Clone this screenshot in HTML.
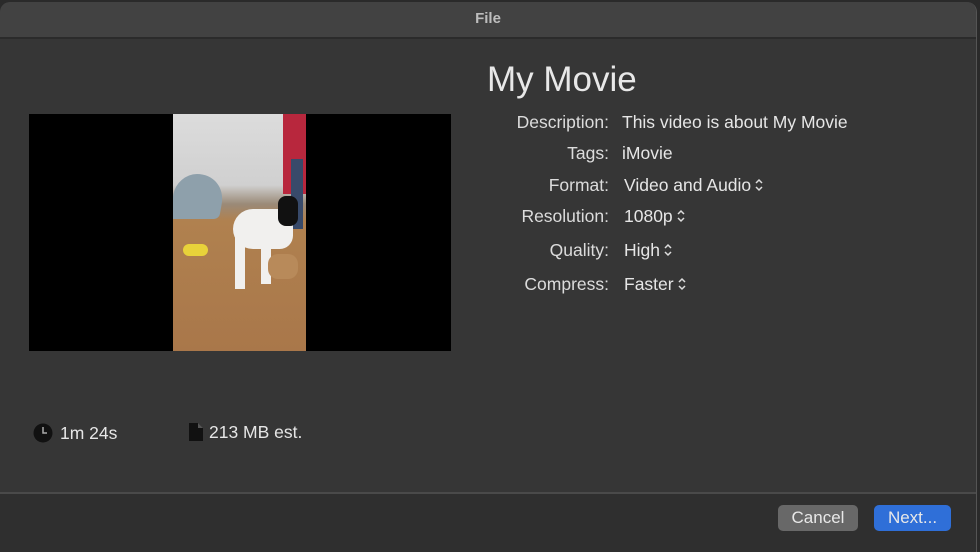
<!DOCTYPE html>
<html><head><style>
body{margin:0;width:980px;height:552px;background:#2a2a2a;overflow:hidden;font-family:"Liberation Sans",sans-serif;position:relative}
.win{position:absolute;left:0;top:2px;width:976px;height:550px;background:#363636;border-radius:10px 10px 0 0;overflow:hidden;border-right:1px solid #555}
.tb{position:absolute;left:0;top:0;right:0;height:35px;background:#424242;border-bottom:2px solid #2b2b2b;color:#bdbdbd;font-weight:bold;font-size:15px;text-align:center;line-height:34px}
.a{position:absolute;color:#e6e6e6;font-size:17.5px;white-space:nowrap}
.a svg{vertical-align:-2px;margin-left:3px}
.l{position:absolute;right:367px;color:#dcdcdc;font-size:17.5px;white-space:nowrap}
.btn{position:absolute;top:503px;height:26px;border-radius:5px;color:#e8e8e8;font-size:17px;text-align:center;line-height:26px}
</style></head><body>
<div class="win">
<div class="tb">File</div>
<div class="a" style="left:487px;top:58px;font-size:35px;color:#e8e8e8">My Movie</div>
<div style="position:absolute;left:29px;top:112px;width:422px;height:237px;background:#000"></div>
<div style="position:absolute;left:173px;top:112px;width:133px;height:237px;overflow:hidden;background:linear-gradient(#dcdcdc 0,#d0d0d0 30%,#9a8a78 38%,#b0814f 45%,#a9774a 100%)">
 <div style="position:absolute;left:0;top:60px;width:50px;height:45px;background:#8ea0ab;border-radius:20px 30px 5px 5px;transform:skewX(-10deg)"></div>
 <div style="position:absolute;left:110px;top:0;width:23px;height:80px;background:#b8273d"></div>
 <div style="position:absolute;left:118px;top:45px;width:12px;height:70px;background:#384a6a"></div>
 <div style="position:absolute;left:60px;top:95px;width:60px;height:40px;background:#f1f0ee;border-radius:30px 20px 20px 30px"></div>
 <div style="position:absolute;left:105px;top:82px;width:20px;height:30px;background:#111;border-radius:8px"></div>
 <div style="position:absolute;left:62px;top:120px;width:10px;height:55px;background:#f1f0ee"></div>
 <div style="position:absolute;left:88px;top:120px;width:10px;height:50px;background:#f1f0ee"></div>
 <div style="position:absolute;left:10px;top:130px;width:25px;height:12px;background:#e8d23a;border-radius:6px"></div>
 <div style="position:absolute;left:95px;top:140px;width:30px;height:25px;background:#b88a5a;border-radius:10px"></div>
</div>
<svg style="position:absolute;left:33px;top:421px" width="20" height="20" viewBox="0 0 20 20"><circle cx="10" cy="10" r="9.5" fill="#111"/><path d="M10 4V10H14" stroke="#aaa" stroke-width="1.5" fill="none"/></svg>
<div class="a" style="left:60px;top:421px">1m 24s</div>
<svg style="position:absolute;left:188px;top:420px" width="16" height="20" viewBox="0 0 16 20"><path d="M1 1H10L15 6V19H1Z" fill="#111"/><path d="M10 1V6H15" fill="#555"/></svg>
<div class="a" style="left:209px;top:420px">213 MB est.</div>
<div class="l" style="top:110px">Description:</div><div class="a" style="left:622px;top:110px">This video is about My Movie</div>
<div class="l" style="top:141px">Tags:</div><div class="a" style="left:622px;top:141px">iMovie</div>
<div class="l" style="top:173px">Format:</div><div class="a" style="left:624px;top:173px">Video and Audio<svg width="10" height="16"><path d="M2 6L5 3L8 6M2 10L5 13L8 10" stroke="#ddd" stroke-width="1.5" fill="none"/></svg></div>
<div class="l" style="top:204px">Resolution:</div><div class="a" style="left:624px;top:204px">1080p<svg width="10" height="16"><path d="M2 6L5 3L8 6M2 10L5 13L8 10" stroke="#ddd" stroke-width="1.5" fill="none"/></svg></div>
<div class="l" style="top:238px">Quality:</div><div class="a" style="left:624px;top:238px">High<svg width="10" height="16"><path d="M2 6L5 3L8 6M2 10L5 13L8 10" stroke="#ddd" stroke-width="1.5" fill="none"/></svg></div>
<div class="l" style="top:272px">Compress:</div><div class="a" style="left:624px;top:272px">Faster<svg width="10" height="16"><path d="M2 6L5 3L8 6M2 10L5 13L8 10" stroke="#ddd" stroke-width="1.5" fill="none"/></svg></div>
<div style="position:absolute;left:0;right:0;top:490px;height:2px;background:#4a4a4a"></div>
<div style="position:absolute;left:0;right:0;top:492px;bottom:0;background:#2f2f2f"></div>
<div class="btn" style="left:778px;width:80px;background:#686868">Cancel</div>
<div class="btn" style="left:874px;width:77px;background:#2f6fd8">Next...</div>
</div>
</body></html>
